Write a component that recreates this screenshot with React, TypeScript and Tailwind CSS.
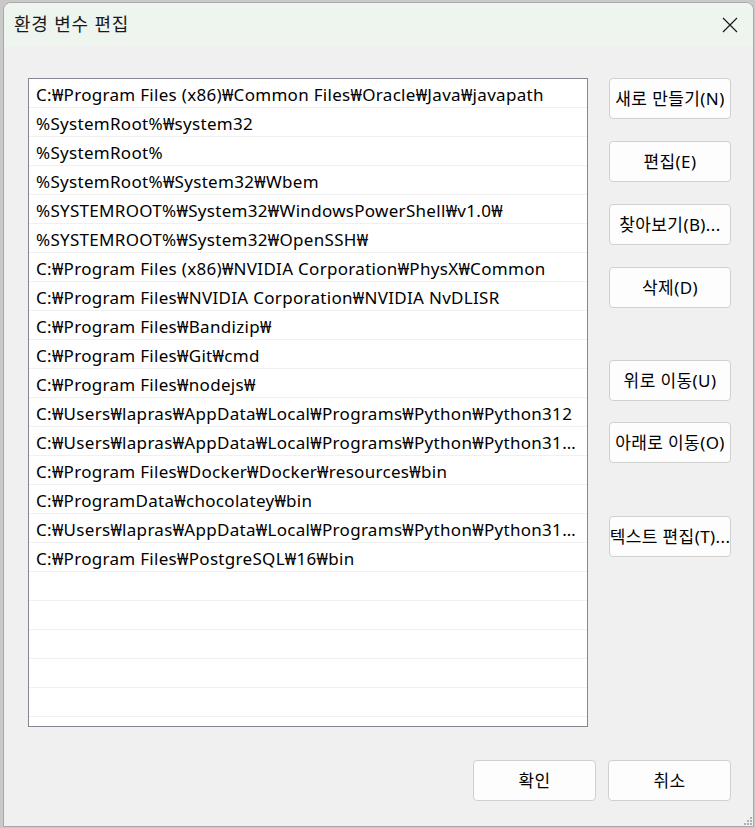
import React from "react";

const paths = [
  "C:₩Program Files (x86)₩Common Files₩Oracle₩Java₩javapath",
  "%SystemRoot%₩system32",
  "%SystemRoot%",
  "%SystemRoot%₩System32₩Wbem",
  "%SYSTEMROOT%₩System32₩WindowsPowerShell₩v1.0₩",
  "%SYSTEMROOT%₩System32₩OpenSSH₩",
  "C:₩Program Files (x86)₩NVIDIA Corporation₩PhysX₩Common",
  "C:₩Program Files₩NVIDIA Corporation₩NVIDIA NvDLISR",
  "C:₩Program Files₩Bandizip₩",
  "C:₩Program Files₩Git₩cmd",
  "C:₩Program Files₩nodejs₩",
  "C:₩Users₩lapras₩AppData₩Local₩Programs₩Python₩Python312",
  "C:₩Users₩lapras₩AppData₩Local₩Programs₩Python₩Python312₩Scripts₩",
  "C:₩Program Files₩Docker₩Docker₩resources₩bin",
  "C:₩ProgramData₩chocolatey₩bin",
  "C:₩Users₩lapras₩AppData₩Local₩Programs₩Python₩Python313₩Scripts₩",
  "C:₩Program Files₩PostgreSQL₩16₩bin",
];

const emptyRows = 5;

const font = {
  fontFamily: '"Noto Sans", "Noto Sans CJK KR", sans-serif',
};

function Btn({ label, className = "" }: { label: string; className?: string }) {
  return (
    <button
      className={
        "flex h-[41px] w-[122px] items-center justify-center overflow-visible whitespace-nowrap rounded-[4px] border border-[#d0d0d0] bg-[#fdfdfd] text-[17px] tracking-[0.4px] text-black " +
        className
      }
    >
      {label}
    </button>
  );
}

export default function App() {
  return (
    <div className="h-[828px] w-[755px] bg-[#c9c9c9] pl-[3px] pt-[2px]" style={font}>
      <div className="flex h-[825px] w-[751px] flex-col overflow-hidden rounded-t-[8px] border border-[#a8a8a8] bg-[#f0f0f0]">
        {/* title bar */}
        <div className="flex h-[43px] shrink-0 items-center justify-between bg-[#eef4ee] pl-[10px]">
          <span className="text-[18px] tracking-[0.8px] text-[#1a1a1a]">환경 변수 편집</span>
          <div className="flex h-full w-[46px] items-center justify-center">
            <svg width="16" height="16" viewBox="0 0 16 16">
              <path d="M1 1 L15 15 M15 1 L1 15" stroke="#1a1a1a" strokeWidth="1.2" />
            </svg>
          </div>
        </div>

        <div className="flex flex-1 pl-[24px] pt-[32px]">
          {/* list */}
          <div className="h-[649px] w-[560px] shrink-0 border border-[#828790] bg-white">
            {paths.map((p) => (
              <div
                key={p}
                className="h-[29px] truncate border-b border-[#f0f0f0] pl-[7px] pr-[10px] pt-[2px] text-[17px] leading-[27px] tracking-[0.3px] text-black"
              >
                {p}
              </div>
            ))}
            {Array.from({ length: emptyRows }).map((_, i) => (
              <div key={i} className="h-[29px] border-b border-[#f0f0f0]" />
            ))}
          </div>

          {/* buttons */}
          <div className="ml-[21px] flex flex-col">
            <Btn label="새로 만들기(N)" />
            <Btn label="편집(E)" className="mt-[22px]" />
            <Btn label="찾아보기(B)..." className="mt-[22px]" />
            <Btn label="삭제(D)" className="mt-[22px]" />
            <Btn label="위로 이동(U)" className="mt-[52px]" />
            <Btn label="아래로 이동(O)" className="mt-[21px]" />
            <Btn label="텍스트 편집(T)..." className="mt-[53px]" />
          </div>
        </div>

        <div className="relative flex h-[66px] shrink-0 justify-end gap-[12px] pr-[22px]">
          <Btn label="확인" className="h-[40px] w-[123px]" />
          <Btn label="취소" className="h-[40px] w-[123px]" />
          <div className="absolute bottom-[1px] right-[1px] grid grid-cols-3 gap-[1px]">
            {[0, 0, 1, 0, 1, 1, 1, 1, 1].map((v, i) => (
              <div key={i} className={"h-[2px] w-[2px] " + (v ? "bg-[#b0b0b0]" : "")} />
            ))}
          </div>
        </div>
      </div>
    </div>
  );
}
